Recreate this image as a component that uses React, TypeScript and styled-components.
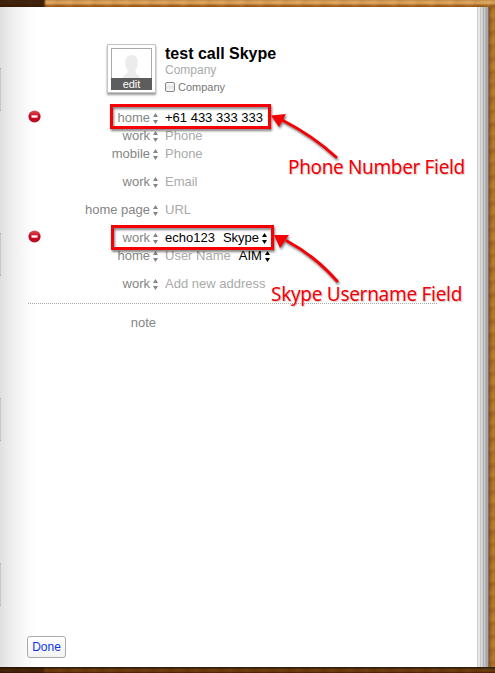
import React from 'react';
import styled, { createGlobalStyle } from 'styled-components';

const GlobalStyle = createGlobalStyle`
  * { box-sizing: border-box; }
  body { margin: 0; overflow: hidden; font-family: "Liberation Sans", Arial, sans-serif; }
`;

const Book = styled.div`
  position: relative;
  width: 495px;
  height: 673px;
  display: grid;
  grid-template-columns: 477px 12px 6px;
  grid-template-rows: 7px 660px 6px;
  overflow: hidden;
`;

const TopWood = styled.div`
  grid-column: 1 / 4;
  background:
    linear-gradient(90deg, rgba(48, 22, 4, 0.9) 0 43px, rgba(62, 30, 8, 0.85) 44px, transparent 46px),
    repeating-linear-gradient(93deg, rgba(80, 35, 0, 0.06), transparent 7px, rgba(255, 225, 160, 0.08) 13px, rgba(80, 35, 0, 0.06) 19px),
    linear-gradient(#c18a48 0, #dda65f 2px, #d19a50 4px, #a9671f 5px, #975716 7px);
`;

const BottomWood = styled.div`
  grid-column: 1 / 4;
  background:
    linear-gradient(90deg, rgba(35, 12, 2, 0.5) 0 43px, transparent 46px),
    repeating-linear-gradient(87deg, rgba(35, 10, 0, 0.14), transparent 9px, rgba(35, 10, 0, 0.14) 17px),
    linear-gradient(#30220d 0 1px, #66390e 2px, #774511 4px, #4a1c07 6px);
`;

const SideWood = styled.div`
  background:
    repeating-linear-gradient(172deg, rgba(90, 42, 0, 0.16), transparent 4px, rgba(225, 160, 75, 0.12) 9px, rgba(90, 42, 0, 0.16) 13px),
    repeating-linear-gradient(197deg, rgba(90, 42, 0, 0.1), transparent 11px, rgba(90, 42, 0, 0.1) 23px),
    linear-gradient(90deg, #865015, #ac6e24 2px, #bc7e33 5px, #b07329);
`;

const PageEdges = styled.div`
  background: linear-gradient(90deg,
    #cfcfcf 0 1px, #e6e6e6 1px 3px, #c6c6c6 3px 4px,
    #dadada 4px 5px, #cdcdcd 5px 6px, #b2b2b2 6px 7px, #c6c6c6 7px 8px,
    #b8b8b8 8px 9px, #a2a2a2 9px 10px, #acacac 10px 11px, #747474 11px 12px);
`;

const Page = styled.main`
  position: relative;
  display: flex;
  flex-direction: column;
  padding: 37px 40px 9px 27px;
  background: linear-gradient(90deg, #dfdfdf 0, #ebebeb 9px, #f4f4f4 19px, #fbfbfb 28px, #fff 37px);
`;

const TabEdge = styled.i<{ $top: number }>`
  position: absolute;
  left: 0;
  top: ${p => p.$top}px;
  width: 1px;
  height: 43px;
  background: #c8c8c8;
  border-top: 1px solid #aaa;
  border-bottom: 1px solid #aaa;
`;

const Header = styled.header`
  display: flex;
  height: 65px;
  padding-left: 80px;
`;

const Avatar = styled.div`
  width: 49px;
  height: 49px;
  padding: 3px;
  background: #fff;
  border: 1px solid #c4c4c4;
  box-shadow: 0 2px 2px rgba(0, 0, 0, 0.4);
`;

const Portrait = styled.div`
  height: 42px;
  display: flex;
  flex-direction: column;
  border: 1px solid #aaa;
  background: #fff;
  svg { display: block; height: 29px; }
`;

const EditLabel = styled.div`
  height: 12px;
  margin: 0 -1px -1px;
  background: #5d5d5d;
  color: #fff;
  font-size: 11px;
  line-height: 12px;
  text-align: center;
`;

const Identity = styled.div`
  padding-left: 9px;
  white-space: nowrap;
`;

const Name = styled.h1`
  margin: 0;
  font-size: 16px;
  line-height: 19px;
  color: #000;
`;

const Company = styled.div`
  font-size: 12px;
  line-height: 14px;
  color: #aaa;
`;

const CompanyOption = styled.label`
  display: flex;
  align-items: center;
  gap: 3px;
  height: 19px;
  font-size: 11px;
  color: #777;
`;

const Box = styled.span`
  width: 10px;
  height: 10px;
  border: 1px solid #888;
  border-radius: 2px;
  background: linear-gradient(#fff, #e5e5e5 50%, #fafafa);
`;

const Fields = styled.section`
  height: 194px;
`;

const Field = styled.div<{ $gap?: number }>`
  display: grid;
  grid-template-columns: 16px 107px 15px auto;
  justify-content: start;
  align-items: center;
  height: 18px;
  margin-top: ${p => p.$gap ?? 0}px;
  font-size: 13px;
  line-height: 18px;
  white-space: nowrap;
`;

const Label = styled.span`
  text-align: right;
  color: #858585;
`;

const Value = styled.span<{ $filled?: boolean }>`
  display: flex;
  align-items: center;
  color: ${p => (p.$filled ? '#000' : '#aaa')};
`;

const Service = styled.span`
  display: flex;
  align-items: center;
  gap: 3px;
  margin-left: 8px;
  color: #000;
`;

const StepperIcon = styled.svg<{ $dark?: boolean }>`
  display: block;
  width: 5px;
  height: 11px;
  margin-left: ${p => (p.$dark ? 0 : 3)}px;
  fill: ${p => (p.$dark ? '#000' : '#858585')};
`;

const RemoveIcon = styled.svg`
  display: block;
  width: 13px;
  height: 13px;
  margin: -3px 0 0 1px;
`;

const Divider = styled.div`
  height: 1px;
  margin-left: 1px;
  background: repeating-linear-gradient(90deg, #aaa 0 1px, transparent 1px 2px);
`;

const Note = styled.div`
  width: 129px;
  padding-top: 11px;
  text-align: right;
  font-size: 13px;
  line-height: 16px;
  color: #858585;
`;

const DoneButton = styled.button`
  width: 39px;
  height: 22px;
  margin-top: auto;
  padding: 0;
  border: 1px solid #aaa;
  border-radius: 3px;
  background: linear-gradient(#fff, #f3f3f3);
  font: 12px "Liberation Sans", Arial, sans-serif;
  color: #0c35e8;
`;

const Callouts = styled.svg`
  position: absolute;
  inset: 0;
  filter: drop-shadow(1px 2px 1px rgba(0, 0, 0, 0.5));
  pointer-events: none;
`;

const Caption = styled.div<{ $x: number; $y: number; $spacing: number }>`
  position: absolute;
  left: ${p => p.$x}px;
  top: ${p => p.$y}px;
  font: 19px/24px "Noto Sans", "Open Sans", sans-serif;
  letter-spacing: ${p => p.$spacing}px;
  white-space: nowrap;
  color: #f40008;
  text-shadow: 1px 1px 1px rgba(0, 0, 0, 0.2);
`;

function Stepper({ dark }: { dark?: boolean }) {
  return (
    <StepperIcon $dark={dark} viewBox="0 0 5 11">
      <path d="M2.5 0 5 4H0zM0 7h5l-2.5 4z" />
    </StepperIcon>
  );
}

function Remove() {
  return (
    <RemoveIcon viewBox="0 0 13 13">
      <defs>
        <linearGradient id="removeFill" x2="0" y2="1">
          <stop stopColor="#d9565b" />
          <stop offset=".5" stopColor="#c7061b" />
          <stop offset="1" stopColor="#b80b22" />
        </linearGradient>
      </defs>
      <circle cx="6.5" cy="6.5" r="6.1" fill="url(#removeFill)" />
      <path d="M3.5 5.3h6v2.4h-6z" fill="#fff" />
    </RemoveIcon>
  );
}

interface Entry {
  label: string;
  value: string;
  filled?: boolean;
  service?: string;
  gap?: number;
}

const entries: Entry[] = [
  { label: 'home', value: '+61 433 333 333', filled: true },
  { label: 'work', value: 'Phone' },
  { label: 'mobile', value: 'Phone' },
  { label: 'work', value: 'Email', gap: 10 },
  { label: 'home page', value: 'URL', gap: 10 },
  { label: 'work', value: 'echo123', service: 'Skype', filled: true, gap: 10 },
  { label: 'home', value: 'User Name', service: 'AIM' },
  { label: 'work', value: 'Add new address', gap: 10 },
];

export default function App() {
  return (
    <>
      <GlobalStyle />
      <Book>
        <TopWood />
        <Page>
          {[61, 226, 391, 556].map(top => <TabEdge key={top} $top={top} />)}
          <Header>
            <Avatar>
              <Portrait>
                <svg viewBox="0 0 38 29">
                  <path d="M11 29v-2l4-3v-3c-4-6-3-15 4-15s8 9 4 15v3l4 3v2z" fill="#ececec" />
                </svg>
                <EditLabel>edit</EditLabel>
              </Portrait>
            </Avatar>
            <Identity>
              <Name>test call Skype</Name>
              <Company>Company</Company>
              <CompanyOption><Box />Company</CompanyOption>
            </Identity>
          </Header>
          <Fields>
            {entries.map((e, i) => (
              <Field key={i} $gap={e.gap}>
                <span>{e.filled && <Remove />}</span>
                <Label>{e.label}</Label>
                <Stepper />
                <Value $filled={e.filled}>
                  {e.value}
                  {e.service && <Service>{e.service}<Stepper dark /></Service>}
                </Value>
              </Field>
            ))}
          </Fields>
          <Divider />
          <Note>note</Note>
          <DoneButton>Done</DoneButton>
        </Page>
        <PageEdges />
        <SideWood />
        <BottomWood />
        <Callouts width="495" height="673" viewBox="0 0 495 673">
          <g fill="none" stroke="#f70005" strokeWidth="3">
            <path d="M111.5 105.5h158v22h-158zM112.5 226.5h160v22h-160z" />
            <path d="M283 120.500Q313 136 336 157M287 241Q315 256 337 281" strokeLinecap="round" />
          </g>
          <path d="M271 115.5 286 114 279 127zM274 235 289 235 280 248z" fill="#f70005" />
        </Callouts>
        <Caption $x={288} $y={155} $spacing={-0.36}>Phone Number Field</Caption>
        <Caption $x={271} $y={282} $spacing={-0.3}>Skype Username Field</Caption>
      </Book>
    </>
  );
}
